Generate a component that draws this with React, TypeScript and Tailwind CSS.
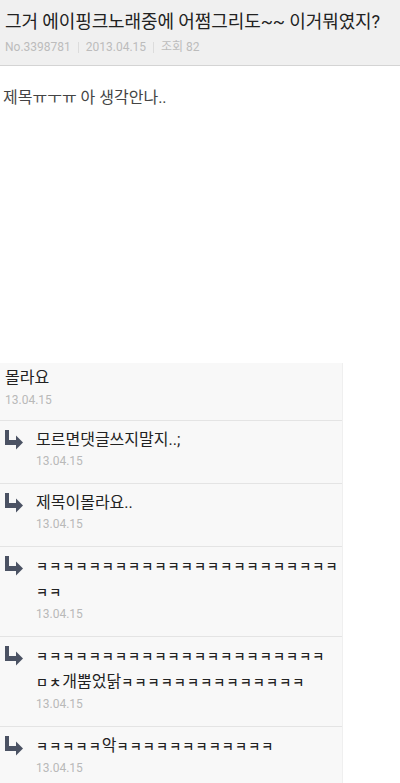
import React from "react";

const font = { fontFamily: "Roboto, 'Noto Sans CJK KR', 'Noto Sans', sans-serif" };

function Arrow() {
  return (
    <svg width="18" height="20" viewBox="0 0 18 20" className="block">
      <rect x="0" y="0" width="4" height="15" fill="#4b5263" />
      <rect x="0" y="10" width="12" height="5" fill="#4b5263" />
      <polygon points="11,5.5 18,12.5 11,19.5" fill="#4b5263" />
    </svg>
  );
}

function K({ n }: { n: number }) {
  return (
    <span className="text-[13px] tracking-[1.2px] font-medium">{"ㅋ".repeat(n)}</span>
  );
}

function Reply({ children }: { children: React.ReactNode }) {
  return (
    <div className="flex border-b border-[#e4e4e4] pl-[5px] pt-[6px] pb-[13px]">
      <div className="w-[31px] shrink-0 pt-[3px]">
        <Arrow />
      </div>
      <div className="min-w-0 flex-1">
        <div className="text-[16px] leading-[25px] text-[#222]">{children}</div>
        <div className="text-[12px] leading-[18px] text-[#b9b9b9]">13.04.15</div>
      </div>
    </div>
  );
}

export default function App() {
  return (
    <div className="w-[400px] h-[783px] bg-white overflow-hidden" style={font}>
      <div className="h-[66px] bg-[#f0f0f0] border-b border-[#d4d4d4] px-[5px] pt-[10px]">
        <div className="text-[18px] leading-[24px] text-[#222] whitespace-nowrap tracking-[-0.1px]">
          그거 에이핑크노래중에 어쩜그리도~~ 이거뭐였지?
        </div>
        <div className="mt-[4px] flex items-center text-[12px] leading-[18px] text-[#bcbcbc]">
          <span>No.3398781</span>
          <span className="mx-[7px] h-[11px] w-px bg-[#dcdcdc]" />
          <span>2013.04.15</span>
          <span className="mx-[7px] h-[11px] w-px bg-[#dcdcdc]" />
          <span>조회 82</span>
        </div>
      </div>
      <div className="h-[297px] px-[3px] pt-[21px]">
        <div className="text-[16px] leading-[22px] text-[#444]">
          제목ㅠㅜㅠ 아 생각안나..
        </div>
      </div>
      <div className="w-[343px] bg-[#f8f8f8] border-r border-[#efefef]">
        <div className="border-b border-[#e4e4e4] px-[5px] pt-[2px] pb-[11px]">
          <div className="text-[16px] leading-[25px] text-[#222]">몰라요</div>
          <div className="text-[12px] leading-[18px] text-[#b9b9b9] mt-[1px]">13.04.15</div>
        </div>
        <Reply>모르면댓글쓰지말지..;</Reply>
        <Reply>제목이몰라요..</Reply>
        <Reply>
          <K n={25} />
        </Reply>
        <Reply>
          <K n={22} />{" "}
          <span className="whitespace-nowrap">
            <span className="text-[13px] tracking-[1.2px] font-medium">ㅁㅊ</span>개뿜었닭
          </span>
          <K n={14} />
        </Reply>
        <Reply>
          <K n={5} />악<K n={12} />
        </Reply>
      </div>
    </div>
  );
}
